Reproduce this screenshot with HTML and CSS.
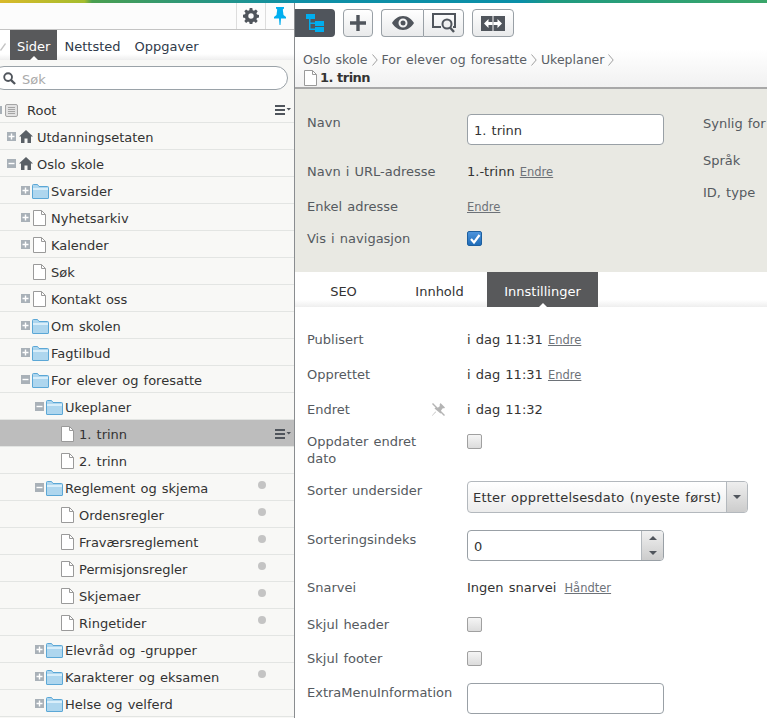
FILE: index.html
```html
<!DOCTYPE html>
<html lang="en">
<head>
  <meta charset="UTF-8" />
  <title>Ukeplaner - 1. trinn</title>
  <link rel="stylesheet" href="styles.css">
</head>
<body>
  <svg class="defs" width="0" height="0">
    <symbol id="folder" viewBox="0 0 17 16">
      <path d="M.5 15V2.500q0-1 1-1h4l1.500 2h8.500q1 0 1 1V15q0 .5-.5.5H1q-.5 0-.5-.5z" fill="#aed6ee" stroke="#5ba7d6"/>
      <path d="M1 5h15v2H1z" fill="#d9eefa"/>
    </symbol>
    <symbol id="page" viewBox="0 0 13 16">
      <path d="M.5.500h8l4 4v11H.5z" fill="#fff" stroke="#9a9a9a"/>
      <path d="M8.500.500v4h4" fill="none" stroke="#9a9a9a"/>
    </symbol>
    <symbol id="home" viewBox="0 0 14 13">
      <path d="M7 0l7 6.500h-2V13H8.500V8.500h-3V13H2V6.500H0z" fill="#5a6066"/>
    </symbol>
    <symbol id="menu" viewBox="0 0 16 10">
      <path d="M0 0h10v2H0zM0 4h10v2H0zM0 8h10v2H0zM11.500 3h4.500l-2.250 2.500z" fill="#50555c"/>
    </symbol>
    <symbol id="plus" viewBox="0 0 9 9">
      <path d="M0 0h9v9H0z" fill="#a9b1b8"/>
      <path d="M1.500 3.800h2.300V1.500h1.400v2.300h2.300v1.400H5.200v2.300H3.800V5.200H1.500z" fill="#fff"/>
    </symbol>
    <symbol id="minus" viewBox="0 0 9 9">
      <path d="M0 0h9v9H0z" fill="#a9b1b8"/>
      <path d="M1.500 3.800h6v1.400h-6z" fill="#fff"/>
    </symbol>
    <symbol id="chevron" viewBox="0 0 6 12">
      <path d="M.5.500L5.200 6 .5 11.500" fill="none" stroke="#a0a0a0"/>
    </symbol>
  </svg>

  <div class="topbar"></div>

  <div class="app">
    <aside class="nav">
      <div class="nav-tools">
        <div class="nav-tool">
          <svg width="16" height="16" viewBox="0 0 16 16"><path fill="#50555c" fill-rule="evenodd" d="M6.700 0h2.600l.4 2.200 1.300.6 1.900-1.300 1.800 1.800-1.300 1.900.6 1.300 2 .4v2.600l-2 .4-.6 1.300 1.300 1.900-1.800 1.800-1.900-1.300-1.300.6-.4 2H6.700l-.4-2-1.300-.6-1.900 1.300-1.800-1.800 1.300-1.900-.6-1.300-2-.4V6.700l2-.4.6-1.300L1.300 3.300l1.800-1.800L5 2.800l1.300-.6zM8 5.300a2.700 2.700 0 1 0 0 5.400 2.700 2.700 0 0 0 0-5.400z"/></svg>
        </div>
        <div class="nav-tool">
          <svg width="12" height="18" viewBox="0 0 12 18"><path fill="#00aeef" d="M2 0h8v1.500L8.800 2.500 9.500 8 12 10v1.500H7L6.500 18h-1L5 11.500H0V10l2.500-2 .7-5.500L2 1.500z"/></svg>
        </div>
      </div>

      <div class="nav-tabs">
        <svg class="nav-check" width="6" height="8" viewBox="0 0 6 8"><path d="M0 7l1 1 5-7-1-1z" fill="#c4c4c4"/></svg>
        <span class="nav-tab active">Sider</span>
        <span class="nav-tab">Nettsted</span>
        <span class="nav-tab">Oppgaver</span>
      </div>

      <div class="search">
        <svg width="13" height="13" viewBox="0 0 14 14"><circle cx="5.500" cy="5.500" r="4.200" fill="none" stroke="#50555c" stroke-width="2"/><path d="M8.500 8.500l4.500 4.500" stroke="#50555c" stroke-width="2.400"/></svg>
        <span>Søk</span>
      </div>

      <div class="tree">
        <div class="node root">
          <i class="root-stub"></i>
          <svg class="root-icon" width="13" height="13" viewBox="0 0 13 13"><rect x=".5" y=".5" width="12" height="12" rx="1.500" fill="#e2e2e2" stroke="#a5a5a5"/><path d="M3 3.500h7M3 5.500h7M3 7.500h7M3 9.500h7" stroke="#a5a5a5"/></svg>
          <span class="label">Root</span>
          <svg class="menu"><use href="#menu"/></svg>
        </div>
        <div class="node d0"><svg class="exp"><use href="#plus"/></svg><svg class="ic-home"><use href="#home"/></svg><span class="label">Utdanningsetaten</span></div>
        <div class="node d0"><svg class="exp"><use href="#minus"/></svg><svg class="ic-home"><use href="#home"/></svg><span class="label">Oslo skole</span></div>
        <div class="node d1"><svg class="exp"><use href="#plus"/></svg><svg class="ic-folder"><use href="#folder"/></svg><span class="label">Svarsider</span></div>
        <div class="node d1"><svg class="exp"><use href="#plus"/></svg><svg class="ic-page"><use href="#page"/></svg><span class="label">Nyhetsarkiv</span></div>
        <div class="node d1"><svg class="exp"><use href="#plus"/></svg><svg class="ic-page"><use href="#page"/></svg><span class="label">Kalender</span></div>
        <div class="node d1"><span class="exp"></span><svg class="ic-page"><use href="#page"/></svg><span class="label">Søk</span></div>
        <div class="node d1"><svg class="exp"><use href="#plus"/></svg><svg class="ic-page"><use href="#page"/></svg><span class="label">Kontakt oss</span></div>
        <div class="node d1"><svg class="exp"><use href="#plus"/></svg><svg class="ic-folder"><use href="#folder"/></svg><span class="label">Om skolen</span></div>
        <div class="node d1"><svg class="exp"><use href="#plus"/></svg><svg class="ic-folder"><use href="#folder"/></svg><span class="label">Fagtilbud</span></div>
        <div class="node d1"><svg class="exp"><use href="#minus"/></svg><svg class="ic-folder"><use href="#folder"/></svg><span class="label">For elever og foresatte</span></div>
        <div class="node d2"><svg class="exp"><use href="#minus"/></svg><svg class="ic-folder"><use href="#folder"/></svg><span class="label">Ukeplaner</span></div>
        <div class="node d3 selected"><span class="exp"></span><svg class="ic-page"><use href="#page"/></svg><span class="label">1. trinn</span><svg class="menu"><use href="#menu"/></svg></div>
        <div class="node d3"><span class="exp"></span><svg class="ic-page"><use href="#page"/></svg><span class="label">2. trinn</span></div>
        <div class="node d2"><svg class="exp"><use href="#minus"/></svg><svg class="ic-folder"><use href="#folder"/></svg><span class="label">Reglement og skjema</span><i class="dot"></i></div>
        <div class="node d3"><span class="exp"></span><svg class="ic-page"><use href="#page"/></svg><span class="label">Ordensregler</span><i class="dot"></i></div>
        <div class="node d3"><span class="exp"></span><svg class="ic-page"><use href="#page"/></svg><span class="label">Fraværsreglement</span><i class="dot"></i></div>
        <div class="node d3"><span class="exp"></span><svg class="ic-page"><use href="#page"/></svg><span class="label">Permisjonsregler</span><i class="dot"></i></div>
        <div class="node d3"><span class="exp"></span><svg class="ic-page"><use href="#page"/></svg><span class="label">Skjemaer</span><i class="dot"></i></div>
        <div class="node d3"><span class="exp"></span><svg class="ic-page"><use href="#page"/></svg><span class="label">Ringetider</span><i class="dot"></i></div>
        <div class="node d2"><svg class="exp"><use href="#plus"/></svg><svg class="ic-folder"><use href="#folder"/></svg><span class="label">Elevråd og -grupper</span></div>
        <div class="node d2"><svg class="exp"><use href="#plus"/></svg><svg class="ic-folder"><use href="#folder"/></svg><span class="label">Karakterer og eksamen</span><i class="dot"></i></div>
        <div class="node d2"><svg class="exp"><use href="#plus"/></svg><svg class="ic-folder"><use href="#folder"/></svg><span class="label">Helse og velferd</span></div>
      </div>
    </aside>

    <main class="main">
      <header class="head">
        <div class="toolbar">
          <div class="btn tree-btn">
            <svg width="18" height="18" viewBox="0 0 18 18"><path fill="#00aeef" d="M0 0h9v5H0zM9 7h9v5H9zM9 13h9v5H9zM3 5h1.500v9.500H9V16H3zM3 8.500h6V10H3z"/></svg>
          </div>
          <div class="btn plus-btn">
            <svg width="16" height="16" viewBox="0 0 16 16"><path fill="#50555c" d="M6.300 0h3.400v6.300H16v3.400H9.700V16H6.300V9.700H0V6.300h6.300z"/></svg>
          </div>
          <div class="btn-group">
            <div class="btn eye-btn">
              <svg width="22" height="14" viewBox="0 0 22 14"><path fill="#50555c" fill-rule="evenodd" d="M11 0c5 0 9 3.500 11 7-2 3.500-6 7-11 7S2 10.500 0 7c2-3.500 6-7 11-7zm0 2.500a4.500 4.500 0 1 0 0 9 4.500 4.500 0 0 0 0-9zm0 2a2.500 2.500 0 1 1 0 5 2.500 2.500 0 0 1 0-5z"/></svg>
            </div>
            <div class="btn find-btn">
              <svg width="24" height="20" viewBox="0 0 24 20"><path fill="none" stroke="#50555c" stroke-width="2" d="M9 14H1V1h22v13h-2"/><circle cx="15" cy="11" r="4.500" fill="#f0f0f0" stroke="#50555c" stroke-width="2"/><path d="M18 14.500l4 4.500" stroke="#50555c" stroke-width="2.400"/></svg>
            </div>
          </div>
          <div class="btn wide-btn">
            <svg width="24" height="15" viewBox="0 0 24 15"><path fill="#50555c" d="M0 0h11.500v15H0zM12.500 0H24v15H12.500z"/><path fill="#fff" d="M3 7.500L7.500 3v3h4v3h-4v3zM21 7.500L16.500 3v3h-4v3h4v3z"/></svg>
          </div>
        </div>
        <div class="crumbs">
          <span>Oslo skole</span><svg class="sep"><use href="#chevron"/></svg>
          <span>For elever og foresatte</span><svg class="sep"><use href="#chevron"/></svg>
          <span>Ukeplaner</span><svg class="sep"><use href="#chevron"/></svg>
        </div>
        <div class="title"><svg class="ic-page"><use href="#page"/></svg><b>1. trinn</b></div>
      </header>

      <section class="summary">
        <div class="summary-left">
          <div class="row r-name"><span class="key">Navn</span><input class="text" value="1. trinn"></div>
          <div class="row"><span class="key">Navn i URL-adresse</span><span>1.-trinn <a>Endre</a></span></div>
          <div class="row r-simple"><span class="key">Enkel adresse</span><span><a>Endre</a></span></div>
          <div class="row"><span class="key">Vis i navigasjon</span><span class="check on"><svg width="12" height="12" viewBox="0 0 12 12"><path d="M2 6l3 3.500L10.500 2" fill="none" stroke="#fff" stroke-width="2.200"/></svg></span></div>
        </div>
        <div class="summary-right">
          <span class="key">Synlig for</span>
          <span class="key lang">Språk</span>
          <span class="key">ID, type</span>
        </div>
      </section>

      <div class="tabs">
        <span class="tab">SEO</span>
        <span class="tab">Innhold</span>
        <span class="tab active">Innstillinger</span>
      </div>

      <section class="form">
        <div class="row"><span class="key">Publisert</span><span>i dag 11:31 <a>Endre</a></span></div>
        <div class="row"><span class="key">Opprettet</span><span>i dag 11:31 <a>Endre</a></span></div>
        <div class="row r-changed">
          <span class="key">Endret
            <svg class="unpin" width="13" height="13" viewBox="0 0 13 13"><path fill="#b4b4b4" d="M8.500 0L13 4.500l-1 1-1-.500-2 2.500.500 2-1 1L2.500 5.500l1-1 2 .5L8 3 7.500 2zM4 9l-4 4 0-.5L3.500 8.500zM0 1l1-1 12 12-1 1z"/></svg>
          </span>
          <span>i dag 11:32</span>
        </div>
        <div class="row r-touch"><span class="key two-line">Oppdater endret<br>dato</span><span class="check"></span></div>
        <div class="row low">
          <span class="key">Sorter undersider</span>
          <div class="select"><span class="select-text">Etter opprettelsesdato (nyeste først)</span><span class="select-arrow"><i class="caret"></i></span></div>
        </div>
        <div class="row r-index low">
          <span class="key">Sorteringsindeks</span>
          <div class="spinner"><span class="spinner-val">0</span><span class="spinner-btns"><span><i class="caret up"></i></span><span><i class="caret"></i></span></span></div>
        </div>
        <div class="row r-link"><span class="key">Snarvei</span><span>Ingen snarvei <a class="link-gap">Håndter</a></span></div>
        <div class="row r-hide low"><span class="key">Skjul header</span><span class="check"></span></div>
        <div class="row r-hide low"><span class="key">Skjul footer</span><span class="check"></span></div>
        <div class="row low"><span class="key">ExtraMenuInformation</span><input class="text" value=""></div>
      </section>
    </main>
  </div>
</body>
</html>
```

FILE: styles.css
```css
* {
  box-sizing: border-box;
}
html, body {
  margin: 0;
  height: 718px;
  overflow: hidden;
}
body {
  background: #fff;
  color: #333;
  font-family: 'DejaVu Sans', sans-serif;
  font-size: 13px;
  line-height: 18px;
  word-spacing: 1px;
}
.defs {
  display: block;
  height: 0;
}
.topbar {
  height: 3px;
  background: linear-gradient(to right, #d9b92a 0%, #a5bd2e 11%, #4a9f50 12%, #0f8fa6 38%, #0a8fa8 68%, #1f9a80 72%, #3aa66a 100%);
}
.app {
  display: flex;
  height: 715px;
}

/* left panel */
.nav {
  width: 295px;
  flex: none;
  border-right: 1px solid #8a8d90;
  background: #f8f8f6;
  overflow: hidden;
}
.nav-tools {
  display: flex;
  justify-content: flex-end;
  height: 27px;
  background: #fcfcfc;
  border-bottom: 1px solid #c4c4c4;
}
.nav-tool {
  width: 29px;
  display: flex;
  align-items: center;
  justify-content: center;
  border-left: 1px solid #ddd;
}
.nav-tabs {
  display: flex;
  align-items: stretch;
  height: 30px;
  padding-left: 10px;
  position: relative;
  background: linear-gradient(#fff 80%, #eee);
  color: #2f3a4a;
}
.nav-check {
  position: absolute;
  left: 0;
  top: 13px;
}
.nav-tab {
  padding: 8px 7px 0;
}
.nav-tab.active {
  background: #58595b;
  color: #fff;
  position: relative;
}
.nav-tab.active::after, .tab.active::after {
  content: "";
  position: absolute;
  left: 50%;
  bottom: 0;
  margin-left: -4px;
  border: 4px solid transparent;
  border-top: 0;
  border-bottom-color: #fff;
}
.search {
  display: flex;
  align-items: center;
  gap: 6px;
  height: 24px;
  margin: 6px 6px 0 -8px;
  padding-left: 10px;
  background: #fff;
  border: 1px solid #9aa2a8;
  border-radius: 12px;
  color: #aaa;
}
.search span {
  padding-top: 3px;
}
.node {
  display: flex;
  align-items: center;
  height: 27px;
  padding-top: 1px;
  border-bottom: 1px solid #e3e5e3;
  color: #333;
}
.label {
  padding-top: 2px;
}
.root {
  height: 33px;
  padding: 8px 0 0 5px;
}
.root .label {
  padding-top: 1px;
}
.root-stub {
  position: absolute;
  left: 0;
  width: 2px;
  height: 8px;
  background: #a9b1b8;
}
.root-icon {
  margin-right: 9px;
}
.d0 { padding-left: 7px; }
.d1 { padding-left: 21px; }
.d2 { padding-left: 35px; }
.d3 { padding-left: 49px; }
.exp {
  width: 9px;
  height: 9px;
  flex: none;
  display: block;
}
.ic-home {
  width: 14px;
  height: 13px;
  margin: 0 4px 0 3px;
  flex: none;
}
.ic-folder {
  width: 17px;
  height: 16px;
  margin: 0 2px 0 2px;
  flex: none;
}
.ic-page {
  width: 13px;
  height: 16px;
  margin: 0 5px 0 3px;
  flex: none;
}
.menu {
  width: 16px;
  height: 10px;
  position: absolute;
  left: 275px;
}
.node.selected {
  background: #bdbdbd;
}
.dot {
  position: absolute;
  left: 258px;
  width: 8px;
  height: 8px;
  margin-top: -5px;
  border-radius: 50%;
  background: #c4c4c4;
}

/* right panel */
.main {
  flex: 1;
  min-width: 0;
  overflow: hidden;
}
.head {
  height: 86px;
  background: linear-gradient(#fff 55%, #f1f1f1);
  border-bottom: 2px solid #a8a8a8;
}
.toolbar {
  display: flex;
  gap: 8px;
  padding-top: 6px;
}
.btn {
  display: flex;
  align-items: center;
  justify-content: center;
  height: 28px;
  background: linear-gradient(#fff, #e9eaeb);
  border: 1px solid #99a0a6;
  border-radius: 4px;
}
.tree-btn {
  width: 40px;
  background: #50555c;
  border: 0;
  border-radius: 0 4px 4px 0;
}
.plus-btn {
  width: 30px;
}
.btn-group {
  display: flex;
}
.eye-btn {
  width: 42px;
  border-radius: 4px 0 0 4px;
  border-right: 0;
}
.find-btn {
  width: 41px;
  border-radius: 0 4px 4px 0;
}
.wide-btn {
  width: 42px;
}
.crumbs {
  display: flex;
  align-items: center;
  gap: 4px;
  margin: 14px 0 0 8px;
  color: #5a5f66;
  font-size: 12.500px;
}
.sep {
  width: 6px;
  height: 12px;
  flex: none;
}
.title {
  display: flex;
  align-items: center;
  margin-left: 6px;
  font-weight: bold;
  letter-spacing: -.5px;
  word-spacing: 0;
  color: #333;
}
.title .ic-page {
  margin-right: 3px;
}
.summary {
  display: flex;
  height: 183px;
  padding: 25px 0 0 12px;
  background: #e9e9e3;
}
.summary-left {
  width: 396px;
  flex: none;
}
.summary-right {
  display: flex;
  flex-direction: column;
  gap: 14px;
  margin-top: 1px;
  white-space: nowrap;
}
.summary-right .lang {
  margin-top: 5px;
}
.row {
  display: grid;
  grid-template-columns: 160px 1fr;
  margin-bottom: 17px;
}
.low .key {
  padding-top: 1px;
}
.key {
  color: #555a60;
  position: relative;
}
a {
  color: #6d7278;
  font-size: 11.500px;
  text-decoration: underline;
}
.r-name {
  margin-bottom: 18px;
}
.r-simple {
  margin-bottom: 14px;
}
.text {
  width: 197px;
  height: 31px;
  padding: 2px 6px 0;
  font: inherit;
  word-spacing: 1px;
  color: #333;
  background: #fff;
  border: 1px solid #99a0a6;
  border-radius: 4px;
}
.check {
  width: 15px;
  height: 15px;
  display: flex;
  align-items: center;
  justify-content: center;
  margin-top: 1px;
  background: linear-gradient(#f5f5f5, #dcdcdc);
  border: 1px solid #a0a0a0;
  border-radius: 2px;
}
.check.on {
  background: linear-gradient(#4d94dc, #1f6cb8);
  border-color: #1d5f9f;
}
.tabs {
  display: flex;
  height: 35px;
  background: linear-gradient(#fff 80%, #eee);
  color: #333;
}
.tab {
  padding-top: 11px;
  text-align: center;
}
.tab:nth-child(1) { width: 97px; }
.tab:nth-child(2) { width: 95px; }
.tab.active {
  width: 111px;
  background: #58595b;
  color: #fff;
  position: relative;
}
.form {
  padding: 24px 0 0 12px;
}
.unpin {
  position: absolute;
  left: 125px;
  top: 2px;
}
.r-changed {
  margin-bottom: 14px;
}
.r-changed .key {
  display: block;
}
.two-line {
  line-height: 17px;
}
.r-touch {
  margin-bottom: 14px;
}
.select {
  display: flex;
  width: 281px;
  height: 32px;
  background: linear-gradient(#fff, #ececec);
  border: 1px solid #b3b8bd;
  border-radius: 4px;
  overflow: hidden;
}
.select-text {
  flex: 1;
  padding: 7px 0 0 5px;
  white-space: nowrap;
  letter-spacing: .2px;
}
.select-arrow {
  width: 21px;
  flex: none;
  display: flex;
  align-items: center;
  justify-content: center;
  background: linear-gradient(#eee, #ccc);
  border-left: 1px solid #b3b8bd;
}
.caret {
  display: block;
  width: 0;
  height: 0;
  border: 4px solid transparent;
  border-bottom: 0;
  border-top-color: #50555c;
}
.caret.up {
  border-top: 0;
  border-bottom: 4px solid #50555c;
}
.spinner {
  display: flex;
  width: 197px;
  height: 31px;
  background: #fff;
  border: 1px solid #99a0a6;
  border-radius: 4px;
  overflow: hidden;
}
.spinner-val {
  flex: 1;
  padding: 7px 0 0 6px;
}
.spinner-btns {
  width: 22px;
  flex: none;
  display: flex;
  flex-direction: column;
  background: linear-gradient(#f0f0f0, #ccc);
  border-left: 1px solid #b3b8bd;
}
.spinner-btns span {
  flex: 1;
  display: flex;
  align-items: center;
  justify-content: center;
}
.r-index, .r-link {
  margin-bottom: 18px;
}
.link-gap {
  margin-left: 3px;
}
.r-hide {
  margin-bottom: 15px;
}
.r-hide .check {
  margin-top: 2px;
}
```
